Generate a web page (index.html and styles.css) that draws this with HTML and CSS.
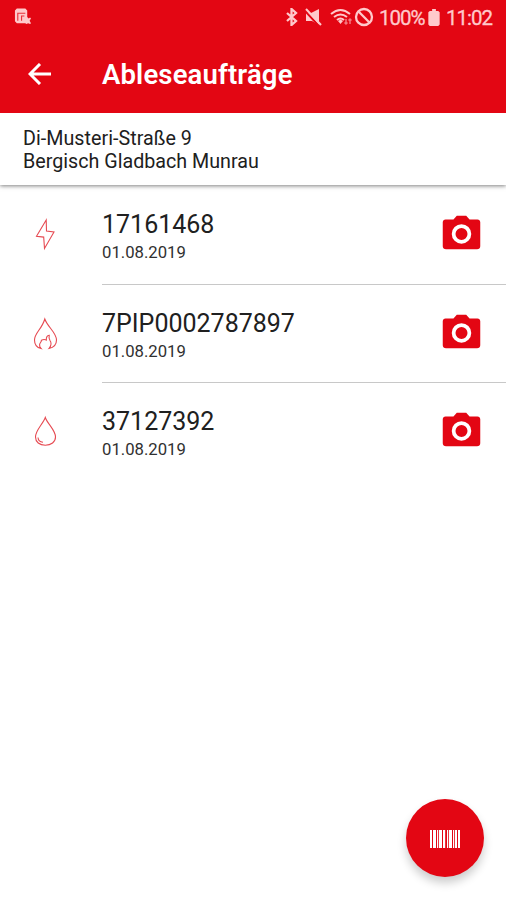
FILE: index.html
```html
<!DOCTYPE html>
<html lang="de">
<head>
<meta charset="utf-8">
<title>Ableseaufträge</title>
<link rel="stylesheet" href="styles.css">
</head>
<body>
<svg class="defs" width="0" height="0">
  <symbol id="camera" viewBox="0 0 24 24"><path fill-rule="evenodd" d="M9.500 2 7.700 4H3.500C2.600 4 2 4.600 2 5.500V18.200c0 1 .7 1.600 1.700 1.600h16.600c1 0 1.700-.6 1.700-1.600V5.500C22 4.600 21.400 4 20.500 4h-4.200L14.500 2zM12 6.500a5.200 5.200 0 1 1 0 10.400 5.200 5.200 0 0 1 0-10.400zm0 2a3.200 3.200 0 1 0 0 6.400 3.200 3.200 0 0 0 0-6.400z"/></symbol>
</svg>
<div class="screen">
  <div class="status">
    <svg class="notice" viewBox="0 0 18 18"><path fill="#ffc9cb" d="M3 0h9l2 2v7l1.500 1.500L17 9.500l1 1-1.500 2.500 1.500 2.500-1 1-2-1-2 1-1-1H3l-2-2V2z"/><path fill="none" stroke="#e8323b" stroke-width="1.200" d="M4 13V5h8M8 13V8h3"/></svg>
    <div class="indicators">
      <svg class="bluetooth" viewBox="0 0 14 18"><path d="m2 5 9 8-4.500 4V1L11 5l-9 8"/></svg>
      <svg class="mute" viewBox="0 0 18 18"><path class="fill" d="M1 5h5l8-4v16l-7-4H1z"/><path class="slash" d="m1 4 13 14"/><path d="m1 1 15 16"/></svg>
      <svg class="wifi" viewBox="0 0 24 18"><path d="M1 6q9.500-8 19 0M4 9q6.500-5 13 0M7 12q3.500-3 7 0"/><path class="fill" d="m8 13 2.500-1.500L13 13l-2.500 3z"/><path class="faint" d="M16 11v5m-1.500-1.500L16 16l1.500-1.500M20 16v-5m-1.500 1.500L20 11l1.500 1.500"/></svg>
      <svg class="blocked" viewBox="0 0 20 20"><circle cx="10" cy="10" r="8"/><path d="m4.300 4.300 11.400 11.400"/></svg>
      <span class="percent">100%</span>
      <svg class="battery" viewBox="0 0 12 18"><path class="fill" d="M4 0h4v2h2.500L12 3.500v13L10.500 18h-9L0 16.500v-13L1.500 2H4z"/></svg>
      <span class="clock">11:02</span>
    </div>
  </div>
  <header class="bar">
    <svg class="back" viewBox="0 0 24 22"><path d="M23 11H2M12 1 2 11l10 10"/></svg>
    <h1>Ableseaufträge</h1>
  </header>
  <section class="address">
    <div class="street">Di-Musteri-Straße 9</div>
    <div class="city">Bergisch Gladbach Munrau</div>
  </section>
  <main>
    <article class="order">
      <svg class="kind" viewBox="0 0 30 36"><path d="M16.200 5 6.500 21.300l7.200.8L14.500 33.500 24 17l-7.500-1z"/></svg>
      <div class="details">
        <div class="text"><div class="number">17161468</div><div class="date">01.08.2019</div></div>
        <svg class="camera"><use href="#camera"/></svg>
      </div>
    </article>
    <article class="order">
      <svg class="kind" viewBox="0 0 30 36"><path d="M11 34.500C6.500 33.500 4.500 30 4.500 26c0-7 7.500-11 10.300-21C17.500 13 26.500 18.500 26.500 26c0 4.500-2.700 7.500-7.500 8.500 2.500-3 2.800-5.500 1-8-1-1.500-1.200-3.300-.8-5.200-2.500.2-3 2.200-2.900 4.700-1.600-.8-3.500-.5-4.900.2.2 1.800-1.500 2.500-1.800 4.300-.2 1.700.4 3 1.400 4z"/></svg>
      <div class="details">
        <div class="text"><div class="number">7PIP0002787897</div><div class="date">01.08.2019</div></div>
        <svg class="camera"><use href="#camera"/></svg>
      </div>
    </article>
    <article class="order">
      <svg class="kind" viewBox="0 0 30 36"><path d="M15.300 5.500C13 12 5.500 18 5.500 25c0 5 4 8.300 9.800 8.300S25.500 30 25.500 25c0-7-8-13-10.200-19.500zM8 25.500c.2 2.800 2 4.500 5 4.700"/></svg>
      <div class="details">
        <div class="text"><div class="number">37127392</div><div class="date">01.08.2019</div></div>
        <svg class="camera"><use href="#camera"/></svg>
      </div>
    </article>
  </main>
  <button class="scan" aria-label="Barcode scannen">
    <svg viewBox="0 0 30 18"><path d="M0 0h2v18H0zM3 0h3v18H3zM7 0h1.200v18H7zM9 0h3v18H9zM13 0h2.200v18H13zM17 0h1.200v18H17zM19 0h3v18h-3zM23 0h1.200v18H23zM25 0h2v18h-2zM28 0h2v18h-2z"/></svg>
  </button>
</div>
</body>
</html>
```
FILE: styles.css
```css
* { box-sizing: border-box; }
body { margin: 0; font-family: Roboto, sans-serif; color: #202020; background: #fff; }
svg { display: block; flex: none; }
.defs { position: absolute; }
.screen { position: relative; width: 506px; height: 900px; overflow: hidden; }
.status { height: 36px; padding: 0 14px 0 14px; display: flex; justify-content: space-between; align-items: center; background: #e30613; color: #ffc9cb; }
.notice { width: 17px; height: 18px; margin-top: -2px; }
.indicators { display: flex; align-items: center; height: 36px; }
.indicators svg { fill: none; stroke: #ffc9cb; stroke-width: 2; }
.indicators .fill { fill: #ffc9cb; stroke: none; }
.indicators .slash { stroke: #e30613; stroke-width: 2; }
.indicators .faint { stroke: #f37880; stroke-width: 1.500; }
.indicators .bluetooth { width: 14px; height: 18px; margin: -2px 6px 0 0; stroke-width: 2.300; }
.mute { width: 18px; height: 18px; margin: -2px 7px 0 0; }
.wifi { width: 24px; height: 18px; margin-top: -2px; }
.indicators .blocked { width: 20px; height: 20px; margin: -3px 5px 0 0; stroke-width: 2.300; }
.percent, .clock { font-size: 20.500px; line-height: 36px; white-space: nowrap; letter-spacing: -1px; -webkit-text-stroke: .3px currentColor; }
.percent { width: 45px; }
.battery { width: 12px; height: 17px; margin: -2px 6px 0 4px; }
.clock { width: 46px; }
.bar { position: relative; z-index: 1; height: 77px; display: flex; align-items: center; padding-left: 28px; background: #e30613; color: #fff; }
.back { width: 24px; height: 22px; margin-top: -2px; fill: none; stroke: #fff; stroke-width: 3; }
h1 { margin: 1px 0 0 50px; font-size: 27.500px; line-height: 32px; font-weight: 600; letter-spacing: .15px; }
.address { height: 72px; padding: 14px 23px 0; font-size: 19.700px; line-height: 23px; box-shadow: 0 1px 4px rgba(0,0,0,.5); }
.street { letter-spacing: .03px; }
main { padding-top: 1px; }
.order { height: 98.500px; display: flex; }
.kind { width: 30px; height: 36px; margin: 29px 42px 0 30px; fill: none; stroke: #e64a52; stroke-width: 1.100; }
.details { flex: 1; display: flex; justify-content: space-between; padding-right: 22px; border-bottom: 1px solid #c8c8c8; }
.order:last-child .details { border-bottom: 0; }
.text { padding-top: 24px; }
.number { font-size: 25px; line-height: 30px; }
.date { margin-top: 2px; font-size: 16.700px; line-height: 22px; color: #303030; }
.camera { width: 45px; height: 45px; margin-top: 26px; fill: #e30613; }
.scan { position: absolute; left: 406px; top: 799px; width: 78px; height: 78px; padding: 0; display: flex; align-items: center; justify-content: center; border: 0; border-radius: 50%; background: #e30613; box-shadow: 0 6px 10px rgba(0,0,0,.2); }
.scan svg { width: 30px; height: 18px; margin-top: 1px; fill: #fff; }
```
